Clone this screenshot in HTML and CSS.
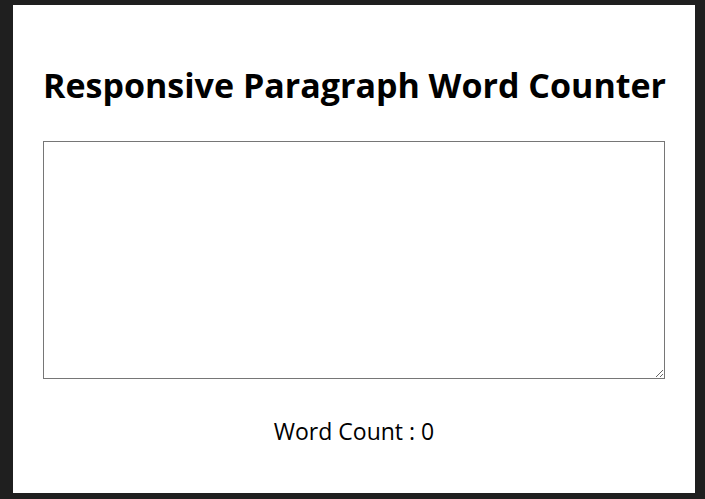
FILE: index.html
```html
<!DOCTYPE html>
<html>
<head>
<meta charset="utf-8">
<link rel="stylesheet" href="styles.css">
</head>
<body>
<main class="card">
  <h1 class="title">Responsive Paragraph Word Counter</h1>
  <textarea class="input"></textarea>
  <p class="count">Word Count : <span>0</span></p>
</main>
</body>
</html>
```
FILE: styles.css
```css
html, body {
  margin: 0;
  height: 100%;
}
body {
  background: #1f1f1f;
  padding: 5px 10px 6px 13px;
  box-sizing: border-box;
  font-family: "Open Sans", "Noto Sans", sans-serif;
}
.card {
  background: #fff;
  height: 100%;
  padding: 0 30px;
  box-sizing: border-box;
  display: flex;
  flex-direction: column;
}
.title {
  font-size: 34px;
  font-weight: 700;
  text-align: center;
  margin: 57px 0 0;
  line-height: 46px;
  color: #000;
  white-space: nowrap;
}
.input {
  margin-top: 33px;
  height: 238px;
  box-sizing: border-box;
  border: 1px solid #767676;
  width: 100%;
  resize: vertical;
}
.count {
  margin: 37px 0 0;
  text-align: center;
  font-size: 23px;
  line-height: 30px;
  color: #000;
}
```
